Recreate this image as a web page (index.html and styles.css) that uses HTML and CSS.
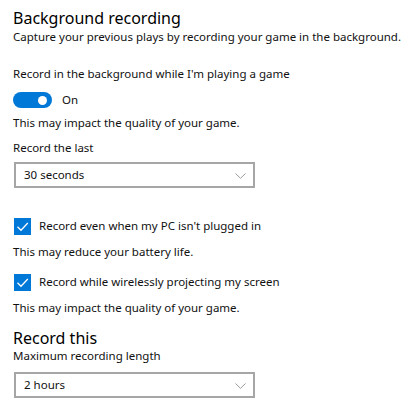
FILE: index.html
```html
<!DOCTYPE html>
<html lang="en">
<head>
<meta charset="utf-8">
<title>Captures</title>
<link rel="stylesheet" href="styles.css">
</head>
<body>
<main class="page">
  <h2 class="heading">Background recording</h2>
  <p class="lead">Capture your previous plays by recording your game in the background.</p>

  <p class="label label-first">Record in the background while I'm playing a game</p>
  <div class="toggle-row">
    <span class="toggle"><span class="knob"></span></span>
    <span class="toggle-text">On</span>
  </div>
  <p class="note note-toggle">This may impact the quality of your game.</p>

  <p class="label label-select">Record the last</p>
  <div class="select">
    <span>30 seconds</span>
    <svg class="chevron" width="11" height="6" viewBox="0 0 11 6"><path d="M0.5 0.5 L5.5 5.3 L10.5 0.5" fill="none" stroke="#9a9a9a" stroke-width="1"/></svg>
  </div>

  <div class="check-row check-first">
    <span class="check"><svg width="17" height="17" viewBox="0 0 17 17"><path d="M3.5 8.8 L7 12.3 L13.8 5" fill="none" stroke="#fff" stroke-width="1.3"/></svg></span>
    <span>Record even when my PC isn't plugged in</span>
  </div>
  <p class="note note-check">This may reduce your battery life.</p>

  <div class="check-row check-second">
    <span class="check"><svg width="17" height="17" viewBox="0 0 17 17"><path d="M3.5 8.8 L7 12.3 L13.8 5" fill="none" stroke="#fff" stroke-width="1.3"/></svg></span>
    <span>Record while wirelessly projecting my screen</span>
  </div>
  <p class="note note-check">This may impact the quality of your game.</p>

  <h3 class="subheading">Record this</h3>
  <p class="label">Maximum recording length</p>
  <div class="select select-last">
    <span>2 hours</span>
    <svg class="chevron" width="11" height="6" viewBox="0 0 11 6"><path d="M0.5 0.5 L5.5 5.3 L10.5 0.5" fill="none" stroke="#9a9a9a" stroke-width="1"/></svg>
  </div>
</main>
</body>
</html>
```
FILE: styles.css
```css
html, body {
  margin: 0;
  padding: 0;
  background: #ffffff;
}

body {
  font-family: "Noto Sans", "Open Sans", sans-serif;
  color: #111111;
  font-size: 11.5px;
  line-height: 16px;
}

.page {
  padding: 7px 0 0 13px;
  display: flex;
  flex-direction: column;
  align-items: flex-start;
}

p, h2, h3 {
  margin: 0;
  font-weight: 400;
  white-space: nowrap;
}

.heading {
  font-size: 16px;
  line-height: 22px;
  color: #000;
}

.label-first {
  margin-top: 21px;
}

.toggle-row {
  margin-top: 10px;
  height: 16px;
  display: flex;
  align-items: center;
  gap: 10px;
}

.toggle {
  width: 39px;
  height: 16px;
  border-radius: 8px;
  background: #0078d7;
  display: flex;
  align-items: center;
  justify-content: flex-end;
  padding-right: 5px;
  box-sizing: border-box;
}

.knob {
  width: 9px;
  height: 9px;
  border-radius: 50%;
  background: #ffffff;
}

.note-toggle {
  margin-top: 7px;
}

.label-select {
  margin-top: 9px;
}

.select {
  margin-top: 6px;
  margin-left: 1px;
  width: 241px;
  height: 26px;
  box-sizing: border-box;
  border: 2px solid #a6a6a6;
  display: flex;
  align-items: center;
  justify-content: space-between;
  padding: 0 7px 0 8px;
  background: #fff;
}

.chevron {
  display: block;
  margin-top: 1px;
}

.check-row {
  display: flex;
  align-items: center;
  gap: 8px;
  height: 18px;
  margin-left: 1px;
}

.check-first {
  margin-top: 29px;
}

.check-second {
  margin-top: 13px;
}

.check {
  width: 17px;
  height: 17px;
  background: #0078d7;
  display: block;
}

.check svg {
  display: block;
}

.note-check {
  margin-top: 9px;
}

.subheading {
  margin-top: 12px;
  font-size: 16px;
  line-height: 20px;
  color: #000;
}

.select-last {
  margin-top: 8px;
}
```
